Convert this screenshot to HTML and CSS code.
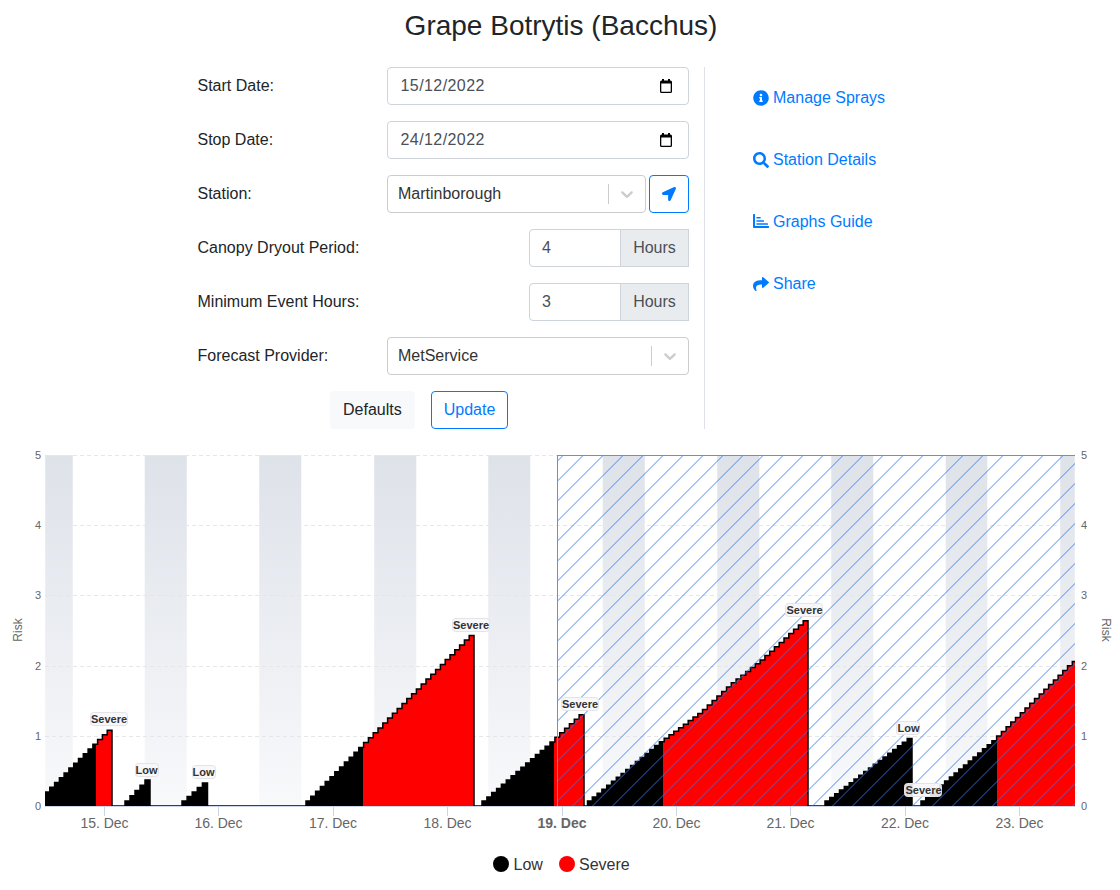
FILE: index.html
```html
<!DOCTYPE html>
<html lang="en">
<head>
<meta charset="utf-8">
<title>Grape Botrytis (Bacchus)</title>
<link rel="stylesheet" href="styles.css">
</head>
<body>
<h1 class="title">Grape Botrytis (Bacchus)</h1>
<div class="panel">
  <form class="form">
    <div class="row">
      <label class="label">Start Date:</label>
      <div class="control date-input"><span>15/12/2022</span>
        <svg class="cal" viewBox="0 0 12 14"><path d="M2 0h2v1.500h4V0h2v1.500h.5A1.500 1.500 0 0 1 12 3v9.500A1.500 1.500 0 0 1 10.500 14h-9A1.500 1.500 0 0 1 0 12.500V3a1.500 1.500 0 0 1 1.500-1.500H2zM1.300 4.500v8.200h9.400V4.500z"/></svg>
      </div>
    </div>
    <div class="row">
      <label class="label">Stop Date:</label>
      <div class="control date-input"><span>24/12/2022</span>
        <svg class="cal" viewBox="0 0 12 14"><path d="M2 0h2v1.500h4V0h2v1.500h.5A1.500 1.500 0 0 1 12 3v9.500A1.500 1.500 0 0 1 10.500 14h-9A1.500 1.500 0 0 1 0 12.500V3a1.500 1.500 0 0 1 1.500-1.500H2zM1.300 4.500v8.200h9.400V4.500z"/></svg>
      </div>
    </div>
    <div class="row">
      <label class="label">Station:</label>
      <div class="station">
        <div class="select"><span class="select-value">Martinborough</span><span class="sep"></span>
          <svg class="chev" viewBox="0 0 20 20"><path d="M4.516 7.548c0.436-0.446 1.043-0.481 1.576 0l3.908 3.747 3.908-3.747c0.533-0.481 1.141-0.446 1.574 0 0.436 0.445 0.408 1.197 0 1.615-0.406 0.418-4.695 4.502-4.695 4.502-0.217 0.223-0.502 0.335-0.787 0.335s-0.57-0.112-0.789-0.335c0 0-4.287-4.084-4.695-4.502s-0.436-1.170 0-1.615z"/></svg>
        </div>
        <button type="button" class="locate"><svg class="icon-sm" viewBox="0 0 512 512"><path d="M444.52 3.52L28.74 195.42c-47.97 22.39-31.98 92.75 19.19 92.75h175.91v175.91c0 51.17 70.36 67.17 92.75 19.19l191.9-415.78c15.99-38.39-25.59-79.97-63.97-63.97z"/></svg></button>
      </div>
    </div>
    <div class="row">
      <label class="label">Canopy Dryout Period:</label>
      <div class="group"><span class="group-value">4</span><span class="addon">Hours</span></div>
    </div>
    <div class="row">
      <label class="label">Minimum Event Hours:</label>
      <div class="group"><span class="group-value">3</span><span class="addon">Hours</span></div>
    </div>
    <div class="row">
      <label class="label">Forecast Provider:</label>
      <div class="select"><span class="select-value">MetService</span><span class="sep"></span>
        <svg class="chev" viewBox="0 0 20 20"><path d="M4.516 7.548c0.436-0.446 1.043-0.481 1.576 0l3.908 3.747 3.908-3.747c0.533-0.481 1.141-0.446 1.574 0 0.436 0.445 0.408 1.197 0 1.615-0.406 0.418-4.695 4.502-4.695 4.502-0.217 0.223-0.502 0.335-0.787 0.335s-0.57-0.112-0.789-0.335c0 0-4.287-4.084-4.695-4.502s-0.436-1.170 0-1.615z"/></svg>
      </div>
    </div>
    <div class="actions">
      <button type="button" class="btn btn-light">Defaults</button>
      <button type="button" class="btn btn-outline">Update</button>
    </div>
  </form>
  <nav class="links">
    <a class="link"><svg class="icon" viewBox="0 0 512 512"><path d="M256 8C119.043 8 8 119.083 8 256c0 136.997 111.043 248 248 248s248-111.003 248-248C504 119.083 392.957 8 256 8zm0 110c23.196 0 42 18.804 42 42s-18.804 42-42 42-42-18.804-42-42 18.804-42 42-42zm56 254c0 6.627-5.373 12-12 12h-88c-6.627 0-12-5.373-12-12v-24c0-6.627 5.373-12 12-12h12v-64h-12c-6.627 0-12-5.373-12-12v-24c0-6.627 5.373-12 12-12h64c6.627 0 12 5.373 12 12v100h12c6.627 0 12 5.373 12 12v24z"/></svg>Manage Sprays</a>
    <a class="link"><svg class="icon" viewBox="0 0 512 512"><path d="M505 442.7L405.3 343c-4.5-4.5-10.6-7-17-7H372c27.6-35.3 44-79.7 44-128C416 93.1 322.9 0 208 0S0 93.1 0 208s93.1 208 208 208c48.3 0 92.7-16.4 128-44v16.3c0 6.4 2.5 12.5 7 17l99.7 99.7c9.4 9.4 24.600 9.4 33.900 0l28.300-28.300c9.400-9.400 9.400-24.600.1-34zM208 336c-70.700 0-128-57.200-128-128 0-70.700 57.200-128 128-128 70.700 0 128 57.200 128 128 0 70.700-57.200 128-128 128z"/></svg>Station Details</a>
    <a class="link"><svg class="icon" viewBox="0 0 512 512"><path d="M496 384H64V16C64 7.160 56.840 0 48 0H16C7.160 0 0 7.160 0 16v400c0 17.670 14.330 32 32 32h464c8.840 0 16-7.160 16-16v-32c0-8.840-7.160-16-16-16z"/><rect x="112" y="94" width="130" height="48" rx="8"/><rect x="112" y="200" width="240" height="48" rx="8"/><rect x="112" y="296" width="368" height="48" rx="8"/></svg>Graphs Guide</a>
    <a class="link"><svg class="icon" viewBox="0 0 512 512"><path d="M503.691 189.836L327.687 37.851C312.281 24.546 288 35.347 288 56.015v80.053C127.371 137.907 0 170.1 0 322.326c0 61.441 39.581 122.309 83.333 154.132 13.653 9.931 33.111-2.533 28.077-18.631C66.066 312.814 132.917 274.316 288 272.085V360c0 20.7 24.3 31.453 39.687 18.164l176.004-152c11.071-9.562 11.086-26.753 0-36.328z"/></svg>Share</a>
  </nav>
</div>

<svg class="chart" viewBox="0 440 1120 450" width="1120" height="450">
  <defs>
    <linearGradient id="bandFill" x1="0" y1="0" x2="0" y2="1">
      <stop offset="0" stop-color="#dee2e9"/>
      <stop offset="1" stop-color="#f8f9fb"/>
    </linearGradient>
    <pattern id="hatch" patternUnits="userSpaceOnUse" width="20" height="20">
      <path class="hatch-line" d="M-1 19.500L19.500 -1M17.500 21L21 17.500"/>
    </pattern>
    <clipPath id="plot"><rect x="45" y="450" width="1030" height="356"/></clipPath>
  </defs>

  <g class="bands">
    <rect x="45" y="455" width="28" height="351"/>
    <rect x="144.500" y="455" width="42.500" height="351"/>
    <rect x="259" y="455" width="42.500" height="351"/>
    <rect x="374" y="455" width="42.500" height="351"/>
    <rect x="488" y="455" width="42.500" height="351"/>
    <rect x="602.500" y="455" width="42.500" height="351"/>
    <rect x="717" y="455" width="42.500" height="351"/>
    <rect x="831" y="455" width="42.500" height="351"/>
    <rect x="945.500" y="455" width="42" height="351"/>
    <rect x="1060" y="455" width="15" height="351"/>
  </g>

  <g class="grid">
    <path d="M45 455.500H1075"/>
    <path d="M45 525.500H1075"/>
    <path d="M45 595.500H1075"/>
    <path d="M45 666.500H1075"/>
    <path d="M45 736.500H1075"/>
  </g>

  <path class="axis" d="M45 806.500H1075M104.500 806V816M218.500 806V816M333.500 806V816M447.500 806V816M562.500 806V816M676.500 806V816M790.500 806V816M905.500 806V816M1019.500 806V816"/>

  <g clip-path="url(#plot)">
    <path id="fillSevere" class="fill-severe"/>
    <path id="fillLow" class="fill-low"/>
    <path id="riskLine" class="risk-line"/>
  </g>

  <rect class="forecast-hatch" x="557" y="455" width="518" height="351"/>
  <rect class="forecast-left" x="557" y="455" width="1" height="351"/>
  <rect class="forecast-left" x="557" y="455" width="518" height="1"/>

  <g class="ylabels">
    <text x="41" y="459">5</text>
    <text x="41" y="529">4</text>
    <text x="41" y="599">3</text>
    <text x="41" y="670">2</text>
    <text x="41" y="740">1</text>
    <text x="41" y="810">0</text>
  </g>
  <g class="ylabels-right">
    <text x="1081" y="459">5</text>
    <text x="1081" y="529">4</text>
    <text x="1081" y="599">3</text>
    <text x="1081" y="670">2</text>
    <text x="1081" y="740">1</text>
    <text x="1081" y="810">0</text>
  </g>
  <text class="axis-title" transform="translate(22 630) rotate(-90)">Risk</text>
  <text class="axis-title" transform="translate(1102 630) rotate(90)">Risk</text>

  <g class="xlabels">
    <text x="104.500" y="828">15. Dec</text>
    <text x="218.500" y="828">16. Dec</text>
    <text x="333" y="828">17. Dec</text>
    <text x="447.500" y="828">18. Dec</text>
    <text class="today" x="562" y="828">19. Dec</text>
    <text x="676.500" y="828">20. Dec</text>
    <text x="790.500" y="828">21. Dec</text>
    <text x="905" y="828">22. Dec</text>
    <text x="1019.500" y="828">23. Dec</text>
  </g>

  <g class="tags">
    <rect x="90.500" y="712.500" width="37" height="13" rx="3"/><text x="109" y="723">Severe</text>
    <rect x="135.500" y="763.500" width="23" height="13" rx="3"/><text x="146.500" y="774">Low</text>
    <rect x="192.500" y="765.500" width="23" height="13" rx="3"/><text x="203.500" y="776">Low</text>
    <rect x="452.500" y="618.500" width="37" height="13" rx="3"/><text x="471" y="629">Severe</text>
    <rect x="561.500" y="697.500" width="37" height="13" rx="3"/><text x="580" y="708">Severe</text>
    <rect x="785.500" y="603.500" width="37" height="13" rx="3"/><text x="804.500" y="614">Severe</text>
    <rect x="896.500" y="721.500" width="23" height="13" rx="3"/><text x="908.500" y="732">Low</text>
    <rect x="904.500" y="783.500" width="37" height="13" rx="3"/><text x="923.500" y="794">Severe</text>
  </g>

  <g class="legend">
    <circle cx="501" cy="864" r="8" fill="#000"/><text x="513.500" y="870">Low</text>
    <circle cx="567" cy="864" r="8" fill="#f00"/><text x="579" y="870">Severe</text>
  </g>
</svg>
<script src="chart.js"></script>
</body>
</html>
```
FILE: styles.css
```css
* { box-sizing: border-box; }
html, body { margin: 0; padding: 0; background: #fff; }
body {
  font-family: "Liberation Sans", Arial, sans-serif;
  font-size: 16px;
  line-height: 24px;
  color: #212529;
  overflow: hidden;
}
.title {
  margin: 0;
  padding: 9px 0 0 2px;
  height: 67px;
  font-size: 28px;
  font-weight: 400;
  line-height: 34px;
  text-align: center;
}
.panel { display: flex; justify-content: center; }
.form {
  width: 507px;
  padding-right: 15px;
  border-right: 1px solid #dee2e6;
  display: flex;
  flex-direction: column;
  gap: 16px;
}
.row { display: flex; align-items: center; height: 38px; }
.label { width: 189.5px; flex: none; margin-left: -0.5px; }
.control, .group, .select { height: 38px; }
.date-input {
  flex: 1;
  display: flex;
  align-items: center;
  justify-content: space-between;
  padding: 0 16px 0 12.5px;
  border: 1px solid #ced4da;
  border-radius: 4px;
  color: #495057;
  letter-spacing: .42px;
}
.cal { width: 12px; height: 14px; fill: #000; }
.station { flex: 1; display: flex; gap: 3px; }
.select {
  flex: 1;
  display: flex;
  align-items: center;
  border: 1px solid #ccc;
  border-radius: 4px;
  color: #333;
}
.select-value { flex: 1; padding-left: 10px; }
.sep { width: 1px; height: 20px; background: #ccc; }
.chev { width: 20px; height: 20px; margin: 0 8px; fill: #ccc; }
.locate {
  width: 40px;
  height: 38px;
  padding: 0;
  display: flex;
  align-items: center;
  justify-content: center;
  background: #fff;
  border: 1px solid #007bff;
  border-radius: 4px;
}
.icon-sm { width: 14px; height: 14px; fill: #007bff; }
.group { margin-left: auto; width: 160px; display: flex; }
.group-value {
  flex: 1;
  padding-left: 12px;
  line-height: 36px;
  border: 1px solid #ced4da;
  border-radius: 4px 0 0 4px;
  color: #495057;
}
.addon {
  width: 69px;
  margin-left: -1px;
  line-height: 36px;
  text-align: center;
  background: #e9ecef;
  border: 1px solid #ced4da;
  color: #495057;
}
.actions { display: flex; gap: 16px; padding-left: 132px; }
.btn {
  height: 38px;
  padding: 0 12px;
  font: inherit;
  border-radius: 4px;
}
.btn-light { background: #f8f9fa; border: 1px solid #f8f9fa; color: #212529; }
.btn-outline { background: #fff; border: 1px solid #007bff; color: #007bff; }
.links {
  width: 217px;
  padding: 19px 0 0 48px;
  display: flex;
  flex-direction: column;
  gap: 38px;
}
.link { display: flex; align-items: center; gap: 4px; color: #007bff; height: 24px; white-space: nowrap; }
.icon { width: 16px; height: 16px; fill: #007bff; flex: none; }

.chart { display: block; margin-top: 11px; }
.chart text { font-family: "Liberation Sans", Arial, sans-serif; }
.bands rect { fill: url(#bandFill); stroke: #fff; stroke-opacity: .45; stroke-width: 1; }
.grid path { fill: none; stroke: #e6e6e6; stroke-width: 1; stroke-dasharray: 4 3; }
.axis { fill: none; stroke: #ccd6eb; stroke-width: 1; }
.fill-low { fill: #000; }
.fill-severe { fill: #f00; }
.risk-line { fill: none; stroke: #000; stroke-width: 1.500; }
.hatch-line { fill: none; stroke: #2f74f0; stroke-opacity: .85; stroke-width: 1; }
.forecast-hatch { fill: url(#hatch); }
.forecast-left { fill: #5b92f0; }
.ylabels text { font-size: 11px; fill: #666; text-anchor: end; }
.ylabels-right text { font-size: 11px; fill: #666; }
.axis-title { font-size: 12px; fill: #666; text-anchor: middle; }
.xlabels text { font-size: 14px; fill: #666; text-anchor: middle; }
.xlabels .today { font-weight: 700; }
.tags rect { fill: #f7f7f9; fill-opacity: .9; stroke: #e4e4e8; stroke-width: 1; }
.tags text { font-size: 11px; font-weight: 700; fill: #333; text-anchor: middle; }
.legend text { font-size: 16px; fill: #333; }
```
FILE: chart.js
```js
// Hourly risk steps: each run rises from baseline, [x, risk] knots, optional Severe start.
var HOUR = 4.769, BASE = 806, UNIT = 70.2;
var runs = [
  { x0: 45, x1: 112, knots: [[45, .2], [107, 1.08]], severeAt: 96 },
  { x0: 125, x1: 150, knots: [[125, .07], [145, .37]] },
  { x0: 182, x1: 207.5, knots: [[182, .07], [202.5, .33]] },
  { x0: 306, x1: 474, knots: [[306, .07], [469, 2.43]], severeAt: 363 },
  { x0: 482, x1: 584, knots: [[482, .07], [549, .9], [579, 1.3]], severeAt: 554 },
  { x0: 587.5, x1: 808, knots: [[587.5, .07], [658, .9], [700, 1.34], [730, 1.74], [760, 2.08], [803, 2.64]], severeAt: 663 },
  { x0: 825, x1: 912, knots: [[825, .07], [907, .96]] },
  { x0: 921, x1: 1077, knots: [[921, .07], [992, .93], [1072, 2.06]], severeAt: 997 }
];

function riskAt(knots, x) {
  for (var i = 1; i < knots.length; i++) {
    if (x <= knots[i][0]) {
      var a = knots[i - 1], b = knots[i];
      return a[1] + (b[1] - a[1]) * (x - a[0]) / (b[0] - a[0]);
    }
  }
  return knots[knots.length - 1][1];
}
function yOf(v) { return (BASE - v * UNIT).toFixed(1); }

var line = "M45 " + yOf(riskAt(runs[0].knots, 45)), low = "", severe = "";
runs.forEach(function (run, idx) {
  var n = Math.round((run.x1 - run.x0) / HOUR), w = (run.x1 - run.x0) / n;
  var split = run.severeAt || Infinity;
  var lowPts = [], sevPts = [];
  if (idx) line += "L" + run.x0 + " " + BASE;
  for (var i = 0; i < n; i++) {
    var xa = run.x0 + i * w, xb = xa + w, y = yOf(riskAt(run.knots, xa));
    line += "L" + xa.toFixed(1) + " " + y + "L" + xb.toFixed(1) + " " + y;
    if (xa < split) {
      lowPts.push([xa, y], [Math.min(xb, split), y]);
    }
    if (xb > split) {
      // severe fill runs one pixel under the low fill, so no seam shows
      sevPts.push([Math.max(xa, split - 1), y], [xb, y]);
    }
  }
  line += "L" + run.x1 + " " + BASE;
  function area(pts) {
    if (!pts.length) return "";
    var d = "M" + pts[0][0].toFixed(1) + " " + BASE;
    pts.forEach(function (p) { d += "L" + p[0].toFixed(1) + " " + p[1]; });
    return d + "L" + pts[pts.length - 1][0].toFixed(1) + " " + BASE + "Z";
  }
  low += area(lowPts);
  severe += area(sevPts);
});

document.getElementById("fillLow").setAttribute("d", low);
document.getElementById("fillSevere").setAttribute("d", severe);
document.getElementById("riskLine").setAttribute("d", line);
```
